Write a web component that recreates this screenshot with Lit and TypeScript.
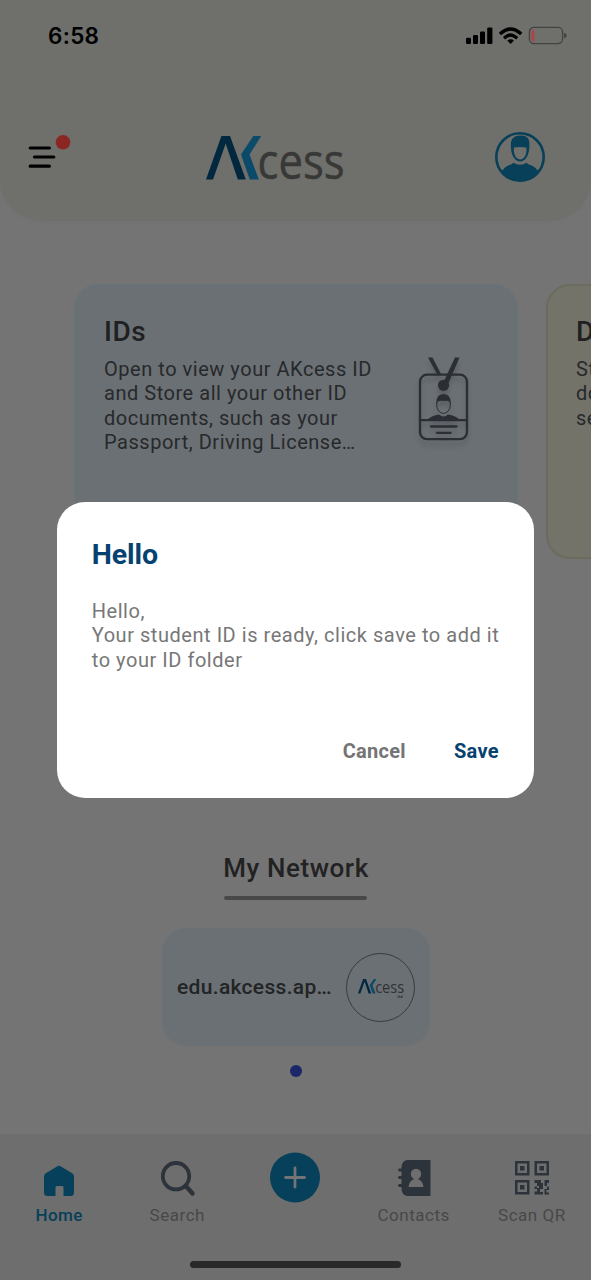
import { LitElement, html, css, svg } from "lit";
import { customElement, property } from "lit/decorators.js";

const wordmark = () => svg`
  <path d="M0 43.5 15.4 0H24L39.800 43.500H31.800L19.700 7.500 7 43.500Z" fill="#01283f"/>
  <path d="M47.300 0H55.200L43.500 18.500 52.800 43.500H43.800L35 18.500Z" fill="#0b4b69"/>
  <text class="word" x="51.500" y="43" textLength="87" lengthAdjust="spacingAndGlyphs">cess</text>`;

@customElement("status-bar")
class StatusBar extends LitElement {
  static styles = css`
    :host { display: flex; justify-content: space-between; align-items: center; height: 72px; padding: 0 24px 0 48px; }
    .time { font: 600 22.5px/1 Inter, sans-serif; letter-spacing: 0.3px; color: #000; }
    svg { display: block; }
  `;
  render() {
    return html`
      <span class="time">6:58</span>
      <svg width="102" height="20" viewBox="0 0 102 20">
        <rect x="1" y="11.700" width="5" height="6.300" rx="1.200"/>
        <rect x="8" y="8.900" width="5" height="9.100" rx="1.200"/>
        <rect x="15" y="5.500" width="5" height="12.500" rx="1.200"/>
        <rect x="22.200" y="1.500" width="5.200" height="16.500" rx="1.200"/>
        <path d="M36.300 6.900Q45.600-.8 54.900 6.900" fill="none" stroke="#000" stroke-width="3.400" stroke-linecap="square"/>
        <path d="M40.300 11.200Q45.600 6.900 50.900 11.200" fill="none" stroke="#000" stroke-width="3.300" stroke-linecap="square"/>
        <path d="M42.200 14.400Q45.600 11.900 49 14.400L45.600 18Z"/>
        <rect x="64.400" y="1.400" width="33.200" height="16.200" rx="4.500" fill="none" stroke="#434341" stroke-width="1.300"/>
        <path d="M99 6.800q2.700.6 2.700 2.700t-2.700 2.700Z" fill="#434341"/>
        <path d="M69.400 4v11.400q-3.200.2-3.200-2.400V6.400q0-2.600 3.200-2.400Z" fill="#a84849"/>
      </svg>`;
  }
}

@customElement("top-bar")
class TopBar extends LitElement {
  static styles = css`
    :host { display: flex; align-items: flex-start; padding: 58px 46px 0 28px; }
    svg { display: block; flex: none; }
    .logo { margin: 6px auto 0 134px; overflow: visible; }
    .avatar { margin-top: 2px; }
    .word { font: 400 49px "Open Sans", sans-serif; fill: #383837; stroke: #383837; stroke-width: 0.500px; }
  `;
  render() {
    return html`
      <svg width="44" height="42" viewBox="0 0 44 42">
        <g stroke="#000" stroke-width="3.2" stroke-linecap="round">
          <path d="M2.200 18H21.400M6.500 27H25.800M2.200 36.200H21.400"/>
        </g>
        <circle cx="35" cy="12.300" r="7.300" fill="#8a2723"/>
      </svg>
      <svg class="logo" width="138" height="44" viewBox="0 0 138 44">${wordmark()}</svg>
      <svg class="avatar" width="50" height="50" viewBox="0 0 50 50">
        <defs><clipPath id="c"><circle cx="25" cy="25" r="23.500"/></clipPath></defs>
        <circle cx="25" cy="25" r="23.700" fill="none" stroke="#074058" stroke-width="2.600"/>
        <g clip-path="url(#c)" fill="#074058">
          <path d="M5 43Q8 34.500 16 32.500L18.500 30.800Q21.500 32.800 25 32.800 28.500 32.800 31.500 30.800L34 32.500Q42 34.500 45 43V50H5Z"/>
          <path d="M16.200 19Q15 9 17.500 6.500 20.500 3.300 25.500 3.500 31 3.400 33.200 6.500 35.200 9.500 34 19 33 24.500 30 27.500 27.800 29.600 25.200 29.600 22.500 29.600 20.300 27.500 17.200 24.500 16.200 19Z"/>
        </g>
        <path d="M19 15.500Q25 14.500 31.300 15.500 32 22 29.300 25.300 27.200 27.600 25.200 27.600 23 27.600 21 25.300 18.300 22 19 15.500Z" fill="#70706d"/>
      </svg>`;
  }
}

@customElement("topic-card")
class TopicCard extends LitElement {
  @property() heading = "";
  @property({ attribute: false }) lines: string[] = [];
  @property() more = "";
  static styles = css`
    :host { display: flex; flex: none; box-sizing: border-box; width: 444px; height: 275px; padding: 30px 47px 0 28px;
      border: 2px solid #677379; border-radius: 24px; background: #6b7074; justify-content: space-between; }
    :host([tone="cream"]) { background: #73736a; border-color: #6b6b5e; }
    h2 { margin: 0 0 9px; font: 500 28px/32px Roboto, sans-serif; letter-spacing: 0.550px; color: #1f2022; }
    p { margin: 0; font: 400 20px/24.300px Roboto, sans-serif; letter-spacing: 0.530px; color: #27292b; white-space: nowrap; }
    .more { letter-spacing: -1.200px; }
    svg { display: block; margin-top: 41px; filter: drop-shadow(0 5px 2px rgba(20, 20, 25, 0.180)); }
  `;
  render() {
    const last = this.lines.length - 1;
    return html`
      <div>
        <h2>${this.heading}</h2>
        ${this.lines.map((l, i) => html`<p>${l}${i === last && this.more ? html`<span class="more">${this.more}</span>` : ""}</p>`)}
      </div>
      <svg width="52" height="86" viewBox="0 0 52 86">
        <g fill="none" stroke="#2b2f35" stroke-width="2.300">
          <rect x="3" y="17.700" width="47" height="64.500" rx="7"/>
          <path d="M3 63.200H50"/>
          <path d="M14 69.500H39.500M20 75.800H33.500" stroke-linecap="round"/>
        </g>
        <path d="M11 .5H15.500L24 17H20ZM38 .5H42.500L31.500 26 27 24Z" fill="#2b2f35"/>
        <circle cx="26.500" cy="28.300" r="5.600" fill="#2b2f35"/>
        <path d="M11 63Q11.500 59.500 22 57.500 26.500 61.500 31 57.500 41.500 59.500 42 63Z" fill="#2b2f35"/>
        <path d="M19.800 45V49Q20.500 55.500 26.500 56.500 32.500 55.500 33.200 49V45" fill="none" stroke="#2b2f35" stroke-width="1"/>
        <path d="M19.500 47Q18.500 37.500 26.500 37 34.500 37.500 33.500 47 32.500 43 26.500 44 20.500 43 19.500 47Z" fill="#2b2f35"/>
      </svg>`;
  }
}

@customElement("network-section")
class NetworkSection extends LitElement {
  static styles = css`
    :host { display: flex; flex-direction: column; align-items: center; }
    h2 { margin: 0; padding-left: 1px; font: 500 26px/32px Roboto, sans-serif; letter-spacing: 0.580px; color: #222; white-space: nowrap; }
    .rule { width: 143px; height: 4px; border-radius: 2px; background: #484848; margin: 12px 0 28px; }
    .chip { box-sizing: border-box; display: flex; align-items: center; justify-content: space-between; width: 268px; height: 118px;
      padding: 0 13.500px 0 14.500px; border: 1px solid #6a7277; border-radius: 24px; background: #6b7074; }
    .name { font: 500 21px/26px Roboto, sans-serif; letter-spacing: 0.320px; color: #222426; white-space: nowrap; }
    .more { letter-spacing: -1.100px; }
    .badge { box-sizing: border-box; display: grid; place-items: center; width: 69px; height: 69px; border: 1.500px solid #373b3e; border-radius: 50%; }
    .badge svg { display: block; overflow: visible; margin-top: 4px; }
    .word { font: 400 49px "Open Sans", sans-serif; fill: #303335; }
    .sub { font: 700 13px Roboto, sans-serif; fill: #303335; }
    .dot { width: 12px; height: 12px; border-radius: 50%; background: #1b2767; margin-top: 19px; }
  `;
  render() {
    return html`
      <h2>My Network</h2>
      <div class="rule"></div>
      <div class="chip">
        <span class="name">edu.akcess.ap<span class="more">...</span></span>
        <div class="badge">
          <svg width="46" height="20" viewBox="0 0 138 60">${wordmark()}<text class="sub" x="115" y="57">.ltd</text></svg>
        </div>
      </div>
      <div class="dot"></div>`;
  }
}

const finder = (x: number, y: number) => svg`
  <path fill-rule="evenodd" d="M${x} ${y}h14.500v14.500h-14.500ZM${x + 2.500} ${y + 2.500}v9.500h9.500v-9.500ZM${x + 5} ${y + 5}h4.500v4.500h-4.500Z"/>`;

@customElement("tab-bar")
class TabBar extends LitElement {
  static styles = css`
    :host { display: flex; flex-direction: column; align-items: center; height: 146px; background: #6e6e6e; }
    .tabs { display: grid; grid-template-columns: repeat(5, 1fr); width: 591px; height: 127px; }
    .tab { display: flex; flex-direction: column; align-items: center; padding-top: 18px; }
    svg { display: block; fill: #2c333b; }
    .label { font: 400 17px/22px Roboto, sans-serif; letter-spacing: 0.520px; color: #484848; white-space: nowrap; margin-top: 2px; }
    .on { font-weight: 500; letter-spacing: 0.350px; color: #06405a; }
    .on-icon { fill: #06405a; }
    .add { fill: #06405a; }
    .home-indicator { width: 211px; height: 7px; border-radius: 4px; background: #292929; }
  `;
  render() {
    return html`
      <div class="tabs">
        <div class="tab">
          <svg class="on-icon" width="50" height="50" viewBox="0 0 50 50">
            <path d="M23 14.500Q25 13 27 14.500L38.500 21.500Q40 22.500 40 24.500V40.500Q40 44 36.500 44H29.500V35.500Q29.500 34 28 34H23Q21.500 34 21.500 35.500V44H13.500Q10 44 10 40.500V24.500Q10 22.500 11.500 21.500Z"/>
          </svg>
          <span class="label on">Home</span>
        </div>
        <div class="tab">
          <svg width="50" height="50" viewBox="0 0 50 50">
            <g fill="none" stroke="#2c333b"><circle cx="24" cy="24.200" r="13.200" stroke-width="3.800"/>
            <path d="M34 34.200 40.500 41.500" stroke-width="4.500" stroke-linecap="round"/></g>
          </svg>
          <span class="label">Search</span>
        </div>
        <div class="tab">
          <svg class="add" width="50" height="51" viewBox="0 0 50 51">
            <circle cx="25" cy="25.500" r="25"/>
            <path d="M25 16V35M15.500 25.500H34.500" stroke="#737475" stroke-width="2.800" stroke-linecap="round"/>
          </svg>
        </div>
        <div class="tab">
          <svg width="50" height="50" viewBox="0 0 50 50">
            <path d="M18 8H41.500V44H18Q13 43 12.500 37V15Q13 9 18 8Z"/>
            <path d="M10.500 18H14M10.500 25.500H14M10.500 33.500H14" stroke="#2c333b" stroke-width="2.800" stroke-linecap="round"/>
            <g fill="#6e6e6e"><circle cx="27" cy="22" r="5.200"/><path d="M25 25H29L29.500 27.500Q34 29 34.500 35H19.500Q20 29 24.500 27.500Z"/></g>
          </svg>
          <span class="label">Contacts</span>
        </div>
        <div class="tab">
          <svg width="50" height="50" viewBox="0 0 50 50">
            ${finder(8, 9)}${finder(27.500, 9)}${finder(8, 28)}
            <path d="M27.500 28H34V31H36V37H32V34H30V31H27.500ZM27.500 34.500H30V37H27.500ZM30 36H33V40H36V42.500H27.500V39.500H30ZM37.500 28H42V31H40V34H37.500ZM40 34.500H42V38H39.500V40.500H42V42.500H37.500V37H40Z"/>
          </svg>
          <span class="label">Scan QR</span>
        </div>
      </div>
      <div class="home-indicator"></div>`;
  }
}

@customElement("save-dialog")
class SaveDialog extends LitElement {
  static styles = css`
    :host { box-sizing: border-box; display: flex; flex-direction: column; width: 476.500px; height: 296px; padding: 36px 35px 0;
      border-radius: 28px; background: #fff; font-family: Roboto, sans-serif; }
    h1 { margin: 0 0 27px -0.500px; font-size: 28.500px; line-height: 34px; font-weight: 700; letter-spacing: -0.100px; color: #05426f; }
    p { margin: 0 0 0 -0.500px; font-size: 20px; line-height: 24.300px; letter-spacing: 0.540px; color: #777; white-space: nowrap; }
    .actions { display: flex; justify-content: flex-end; gap: 48px; margin-top: 67.500px; font-size: 20px; line-height: 24px; font-weight: 700; letter-spacing: 0.280px; }
    .cancel { color: #757575; }
    .save { color: #05426f; }
  `;
  render() {
    return html`
      <h1>Hello</h1>
      <p>Hello,</p>
      <p>Your student ID is ready, click save to add it</p>
      <p>to your ID folder</p>
      <div class="actions"><span class="cancel">Cancel</span><span class="save">Save</span></div>`;
  }
}

@customElement("app-root")
class AppRoot extends LitElement {
  static styles = css`
    :host { display: flex; flex-direction: column; position: relative; box-sizing: border-box; width: 591px; height: 1280px; overflow: hidden; background: #747474; }
    header { height: 221px; border-radius: 0 0 42px 42px; background: #6f6f6c; box-shadow: 0 0 3px #71716f; }
    .carousel { display: flex; gap: 28px; padding-left: 74px; margin-top: 63px; overflow: hidden; }
    network-section { margin-top: 293px; }
    tab-bar { margin-top: auto; }
    .overlay { position: absolute; inset: 0; display: flex; justify-content: center; align-items: flex-start; padding-top: 502px; }
  `;
  render() {
    return html`
      <header><status-bar></status-bar><top-bar></top-bar></header>
      <div class="carousel">
        <topic-card heading="IDs" more="..." .lines=${["Open to view your AKcess ID", "and Store all your other ID", "documents, such as your", "Passport, Driving License"]}></topic-card>
        <topic-card tone="cream" heading="Documents" .lines=${["Store all your", "documents", "securely"]}></topic-card>
      </div>
      <network-section></network-section>
      <tab-bar></tab-bar>
      <div class="overlay"><save-dialog></save-dialog></div>`;
  }
}
